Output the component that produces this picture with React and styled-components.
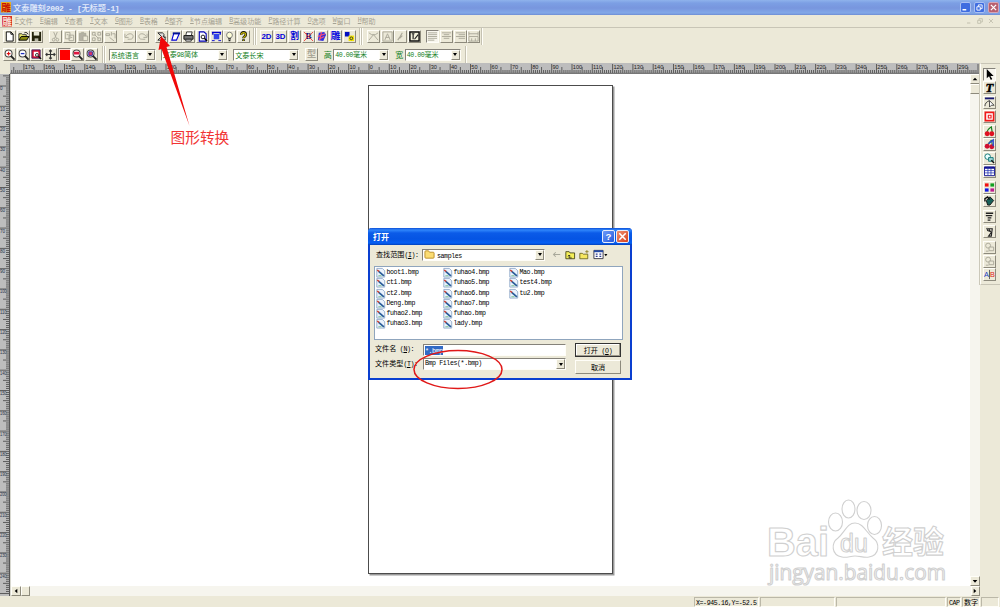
import React from "react";
import styled, { createGlobalStyle, css } from "styled-components";

const face = "#ece9d8";

const Global = createGlobalStyle`
  html, body { margin: 0; padding: 0; overflow: hidden; }
  * { box-sizing: border-box; }
  svg { display: block; flex: none; overflow: visible; }
`;

const Screen = styled.div`
  position: relative;
  width: 1000px;
  height: 607px;
  display: flex;
  flex-direction: column;
  background: ${face};
  color: #000;
  font-family: "Noto Sans CJK SC", sans-serif;
  font-size: 7.1px;
  line-height: 10px;
  white-space: nowrap;
  overflow: hidden;
`;

/* latin letters take half the width of a chinese one */
const Half = styled.span`
  font-family: "Liberation Mono", monospace;
  font-size: 6.6px;
  line-height: 1;
  letter-spacing: -0.4px;
  white-space: pre;
  ${p => p.$u && css`text-decoration: underline;`}
`;

const raised = css`
  border: 1px solid;
  border-color: #fffef8 #8d8a7c #8d8a7c #fffef8;
`;

const sunken = css`
  border: 1px solid;
  border-color: #85827a #fffef8 #fffef8 #85827a;
`;

// ---------- title and menu ----------

const TitleBar = styled.div`
  height: 15px;
  flex: none;
  display: flex;
  align-items: center;
  padding: 0 1px 0 1px;
  background: linear-gradient(#8fb3ec 0, #7c9fe4 3px, #7896de 8px, #82a8e8 13px, #6d8dd4 15px);
  color: #e4ecfb;
  font-weight: 500;
  font-size: 8.2px;
`;

const TitleText = styled.span`
  margin-left: 1px;
  flex: 1;

  ${Half} {
    font-size: 8px;
    letter-spacing: -0.35px;
    font-weight: bold;
  }
`;

const WinButton = styled.span`
  width: 11px;
  height: 11px;
  margin-left: 3px;
  border: 1px solid ${p => (p.$close ? "#d5a5b5" : "#a9c0f3")};
  border-radius: 2px;
  background: ${p => (p.$close ? "#b8606f" : "#3f6de0")};
`;

const MenuBar = styled.div`
  height: 12px;
  flex: none;
  display: flex;
  align-items: center;
  padding: 0 5px 0 2px;
  color: #a5a293;
`;

const MenuItems = styled.span`
  display: flex;
  gap: 7.15px;
  margin-left: 2px;
`;

const MenuItem = styled.span`
  display: flex;
  align-items: center;

  ${Half} {
    width: 3.7px;
  }
`;

const MdiIcons = styled.span`
  display: flex;
  gap: 3px;
`;

const Spring = styled.span`
  flex: 1;
`;

// ---------- toolbars ----------

const ToolRow = styled.div`
  height: 18px;
  flex: none;
  display: flex;
  align-items: center;
  padding-left: 3px;
  border-top: 1px solid ${p => (p.$first ? "#c8c5b6" : face)};
`;

const Group = styled.div`
  display: flex;
  gap: 0.7px;
  margin-right: ${p => p.$after || 0}px;
`;

const ToolButton = styled.span`
  width: 13px;
  height: 13px;
  display: flex;
  align-items: center;
  justify-content: center;
  ${raised}
  ${p => p.$down && sunken}
  background: ${p => (p.$down ? "#f8f6ee" : face)};
`;

const Divider = styled.span`
  width: 2px;
  height: 17px;
  margin-right: ${p => p.$after || 0}px;
  border-left: 1px solid #c5c2b2;
  border-right: 1px solid #fffef8;
`;

const Combo = styled.span`
  width: ${p => p.$w}px;
  height: 12px;
  margin-right: ${p => p.$after || 0}px;
  display: flex;
  align-items: center;
  padding-left: 1px;
  overflow: hidden;
  color: ${p => p.$color || "#128024"};
  background: #fff;
  ${sunken}
`;

const DropButton = styled.span`
  width: 9px;
  height: 100%;
  margin-left: auto;
  flex: none;
  display: flex;
  align-items: center;
  justify-content: center;
  ${raised}
  background: ${face};

  &::after {
    content: "";
    border: 2.5px solid transparent;
    border-top: 3px solid #000;
    border-bottom: 0;
  }
`;

const ComboLabel = styled.span`
  width: 9.5px;
  font-size: 8px;
  color: #128024;
`;

// ---------- work area ----------

const Main = styled.div`
  flex: 1;
  min-height: 0;
  display: flex;
`;

const Workspace = styled.div`
  width: 980px;
  display: flex;
  flex-direction: column;
`;

const RulerRow = styled.div`
  height: 11px;
  flex: none;
  padding-left: 10px;
`;

const BodyRow = styled.div`
  display: flex;
  height: 522px;
`;

const BodyColumn = styled.div`
  width: 969px;
`;

const Middle = styled.div`
  height: 512px;
  flex: none;
  display: flex;
`;

const Canvas = styled.div`
  width: 959px;
  padding: 11px 0 0 357px;
  background: #fff;
`;

const Sheet = styled.div`
  width: 245px;
  height: 489px;
  border: 1px solid #4c4c4c;
  box-shadow: 1.5px 1.5px 0 #9a9a9a;
`;

const VScroll = styled.div`
  width: 10px;
  display: flex;
  flex-direction: column;
  background: #f6f5ee;
`;

const HScroll = styled.div`
  height: 10px;
  display: flex;
  background: #f6f5ee;
`;

const ScrollButton = styled.span`
  width: 9.5px;
  height: 10px;
  flex: none;
  display: flex;
  align-items: center;
  justify-content: center;
  ${raised}
  background: ${face};
`;

const SideTools = styled.div`
  width: 20px;
  height: 222px;
  padding: 3.5px 0 0 2px;
  border-left: 1px solid #fffef8;
  border-top: 1px solid #c8c5b6;
  border-bottom: 1px solid #c8c5b6;
  box-shadow: -1px 0 0 #cbc8b9;
`;

const SideSlot = styled.div`
  margin-bottom: ${p => p.$gap || 0}px;
`;

const StatusBar = styled.div`
  height: 11px;
  flex: none;
  display: flex;
  align-items: center;
  gap: 1px;
  padding-left: 694px;
`;

const StatusCell = styled.span`
  width: ${p => p.$w}px;
  height: 10px;
  padding-left: 1px;
  line-height: 8px;
  border: 1px solid;
  border-color: #bbb8a8 #fffef8 #fffef8 #bbb8a8;
`;

// ---------- dialog ----------

const Dialog = styled.div`
  position: absolute;
  left: 368px;
  top: 228px;
  width: 264px;
  height: 152px;
  display: flex;
  flex-direction: column;
  border: 2px solid #0a3fd0;
  border-top: 0;
  border-radius: 4px 4px 0 0;
  background: ${face};
`;

const DialogTitle = styled.div`
  height: 17px;
  margin: 0 -2px;
  padding: 0 3px 0 5px;
  flex: none;
  display: flex;
  align-items: center;
  border-radius: 4px 4px 0 0;
  background: linear-gradient(#0d4fd6 0, #2f86fb 2px, #0b5be8 5px, #0554e3 11px, #0660f5 15px, #0340b8 17px);
  color: #fff;
  font-size: 8px;
  font-weight: bold;
`;

const DialogButton = styled.span`
  width: 13px;
  height: 13px;
  margin-left: 1px;
  border: 1px solid #e8eefc;
  border-radius: 2px;
  background: ${p => (p.$close ? "linear-gradient(135deg, #ee9070, #d8401c)" : "linear-gradient(135deg, #6d9bf8, #2358de)")};
`;

const LookRow = styled.div`
  height: 21px;
  flex: none;
  display: flex;
  align-items: center;
  padding: 0 0 2px 6px;
`;

const LookLabel = styled.span`
  width: 46px;
`;

const FolderName = styled.span`
  margin-left: 2px;
  padding-top: 1px;
`;

const LookIcons = styled.span`
  display: flex;
  align-items: center;
  gap: 4px;
  margin-left: 7px;
`;

const FileList = styled.div`
  width: 249px;
  height: 74px;
  margin-left: 4px;
  flex: none;
  display: grid;
  grid-template-rows: repeat(6, 10.15px);
  grid-template-columns: 67px 66px 66px;
  grid-auto-flow: column;
  padding: 1px 0 0 1px;
  border: 1px solid #8fa5bd;
  background: #fff;
`;

const FileItem = styled.span`
  display: flex;
  align-items: center;

  ${Half} {
    padding-top: 1px;
    margin-left: 1px;
  }
`;

const Form = styled.div`
  display: grid;
  grid-template-columns: 48px 143px 55px;
  grid-template-rows: 14px 15px;
  row-gap: 2px;
  padding: 2px 0 0 5px;
`;

const FormLabel = styled.span`
  height: 11px;
  line-height: 11px;
  margin-top: ${p => p.$top || 0}px;
`;

const NameField = styled.span`
  height: 12px;
  margin-top: 2px;
  display: flex;
  align-items: center;
  padding-left: 1px;
  background: #fff;
  ${sunken}
`;

const Selected = styled.span`
  height: 9px;
  line-height: 8px;
  background: #316ac5;
  color: #fff;
`;

const PushButton = styled.span`
  width: 46px;
  height: 14px;
  margin: ${p => (p.$main ? "1px 0 0 9px" : "2px 0 0 9px")};
  display: flex;
  align-items: center;
  justify-content: center;
  ${raised}
  ${p => p.$main && css`
    border-color: #333;
    box-shadow: inset -1px -1px 0 #9d9a8c, inset 1px 1px 0 #fff;
  `}
`;

const Overlay = styled.svg`
  position: absolute;
  left: 0;
  top: 0;
`;

const Note = styled.div`
  position: absolute;
  left: 170.5px;
  top: 127px;
  font-size: 14.7px;
  line-height: 20px;
  color: #f23434;
`;

// 12x12 drawings for the buttons
const glyph = (t, fill = "#0000d8", size = 8, family = "Liberation Sans") => (
  <text x="6" y="9" textAnchor="middle" fontSize={size} fontWeight="bold" fill={fill}
    style={{ fontFamily: `"${family}", "Noto Sans CJK SC", sans-serif` }}>{t}</text>
);

const lens = inner => (
  <g>
    <circle cx="5" cy="5" r="3.8" fill="#fff" stroke="#444" strokeWidth="1.1" />
    <path d="M7.5 7.5L11.500 11.500" stroke="#222" strokeWidth="2" />
    {inner}
  </g>
);

const gray = "#aaa798";

const art = {
  new: <path d="M2.500 1h5l2.500 2.500v7.500h-7.500zM7.500 1v2.500H10" fill="#fff" stroke="#000" />,
  open: <g><path d="M1 10V3h3l1 1h4v2" fill="#e8e870" stroke="#333" /><path d="M1 10l2.500-4H12L9.500 10z" fill="#8a8a10" stroke="#000" /><path d="M7 2c2-1 3 0 4 1.500" stroke="#000" fill="none" /></g>,
  save: <g><path d="M1 1h10v10H1z" fill="#23230c" /><path d="M3 1h6v4H3z" fill="#e8e8d8" /><path d="M4 8h4v3H4z" fill="#b8b8a8" /></g>,
  cut: <g fill="none" stroke={gray}><path d="M4 1l3 7M8 1L5 8" /><circle cx="4" cy="9.500" r="1.500" /><circle cx="8" cy="9.500" r="1.500" /></g>,
  copy: <path d="M1.500 1.500h5v7h-5zM5.500 4.500h5v6h-5zM3 4h2M7 7h2" fill={face} stroke={gray} />,
  paste: <g stroke={gray}><path d="M1.500 2.500h7v8h-7z" fill="#b4b1a4" /><path d="M5.500 5.500h5v5h-5z" fill={face} /><path d="M3.500 1.500h3" /></g>,
  grid: <path d="M1.500 1.500h3v3h-3zM7.500 1.500h3v3h-3zM1.500 7.500h3v3h-3zM7.500 7.500h3v3h-3zM4 4l4 4" fill="none" stroke={gray} />,
  pair: <path d="M1 3h4v2H1zM7 1v4M5 7l5 4M8 3h3v5" fill="none" stroke={gray} />,
  undo: <path d="M1 3v4h4M2 6c2-4 8-4 8 0c0 3-3 3-4 3H4" fill="none" stroke={gray} />,
  redo: <path d="M11 3v4H7M10 6C8 2 2 2 2 6c0 3 3 3 4 3h3" fill="none" stroke={gray} />,
  convert: <path d="M2 2h5l2 2-1 2 2 2v2H2l4-4zM8 6l3 1" fill="#ddd" stroke="#222" />,
  shape: <g><path d="M4 3h6l-3 7H2z" fill="#fff" stroke="#0000d8" strokeWidth="1.200" /><path d="M3 2.500h8" stroke="#001090" strokeWidth="2" /></g>,
  print: <g><path d="M4 1h6l-1 4H3z" fill="#fff" stroke="#333" /><path d="M1 5h10v4H1z" fill="#777" stroke="#111" /><path d="M3 9h6v2H3z" fill="#fff" stroke="#222" /></g>,
  preview: <g><path d="M2.500 1h5l2.500 2v8h-7.500z" fill="#fff" stroke="#0000b8" strokeWidth="1.200" /><circle cx="6.500" cy="6.500" r="2" fill="none" stroke="#111" /><path d="M8 8l3 3" stroke="#000" strokeWidth="1.500" /></g>,
  plot: <g><path d="M1 1.500h10M2 1v3M10 1v3" stroke="#0000d0" strokeWidth="1.500" /><path d="M3 3h6v6H3z" fill="#3344e8" /><path d="M1 10.500h3M8 10.500h3" stroke="#0000d0" /></g>,
  bulb: <g><circle cx="6" cy="4.500" r="3.200" fill="#ffffd8" stroke="#777" /><path d="M4.500 8.500h3M5 10.500h2" stroke="#222" strokeWidth="1.300" /></g>,
  help: <g stroke="#111" strokeWidth="2.800" fill="none"><path d="M3.500 4c0-3.500 5-3.500 5 0c0 2-2.500 2-2.500 4M6 9v2" /><path d="M3.500 4c0-3 5-3 5 0c0 2-2.500 2-2.500 4M6 9.500v1" stroke="#c8b800" strokeWidth="1.200" /></g>,
  d2: glyph("2D", "#0000d8", 8.6),
  d3: glyph("3D", "#0000d8", 8.6),
  carve: glyph("割", "#0000d8", 9.5),
  noB: <g>{glyph("B", "#10107a", 10, "Liberation Serif")}<path d="M1 1l10 10M11 1L1 11" stroke="#f03030" strokeWidth=".9" /></g>,
  flag: <g><path d="M3 2l6-1 2 3-3 7-6-1z" fill="#3030e0" /><path d="M2 6l8-3M3 9l6-3M6 1L4 10" stroke="#ff5070" strokeWidth="1.200" /></g>,
  diao: glyph("雕", "#1010e0", 10.5),
  boxes: <g><path d="M1 1h5v5H1z" fill="#0010c0" /><path d="M5 5h6v6H5z" fill="#f6e800" /><circle cx="8" cy="8" r="1.500" fill="none" stroke="#333" /></g>,
  curve: <path d="M1 2l3 2M11 2L8 4M1 10l5-6 5 6M4 4h4" fill="none" stroke={gray} />,
  boxA: <path d="M1 1h10v10H1zM3 10l3-7 3 7M4 7h4" fill="none" stroke={gray} />,
  slash: <path d="M3 10l2-3 3-5M5 8l3-3" fill="none" stroke={gray} strokeWidth="1.200" />,
  edit: <g><path d="M1 1h10v10H1z" fill="#f2f0dc" stroke="#111" strokeWidth="1.600" /><path d="M3 3h3M4.500 3v6M6 9l4-5" stroke="#222" strokeWidth="1.300" /></g>,
  left: <path d="M1 2h10M1 4h10M1 6h10M1 8h10M1 10h7" stroke={gray} />,
  center: <path d="M1 2h10M3 4h6M1 6h10M3 8h6" stroke={gray} />,
  right: <path d="M1 2h10M4 4h7M1 6h10M4 8h7" stroke={gray} />,
  width: <path d="M1 1v4M11 1v4M1 3h10M1 6h10v5H1zM4 8v3M8 8v3" fill="none" stroke={gray} />,
  zoomIn: lens(<path d="M3 5h4M5 3v4" stroke="#e01010" strokeWidth="1.200" />),
  zoomOut: lens(<path d="M3 5h4" stroke="#2030c0" strokeWidth="1.400" />),
  fit: <g><path d="M1 1h9v9H1z" fill="#e01030" stroke="#402060" /><path d="M3 3h5v5H3z" fill="#fff" /><circle cx="6.500" cy="6.500" r="1.600" fill="#fff" stroke="#222" /><path d="M8 8l3 3" stroke="#111" strokeWidth="1.500" /></g>,
  move: <path d="M6 1v10M1 6h10M4.500 2.500L6 1l1.500 1.500M4.500 9.500L6 11l1.500-1.500M2.500 4.500L1 6l1.500 1.500M9.500 4.500L11 6 9.500 7.500" fill="none" stroke="#333" strokeWidth="1.200" />,
  red: <path d="M1 1h11v11H1z" fill="#ff0000" />,
  zoomR: lens(<path d="M2 3h6v3H2z" fill="#e01840" />),
  zoomB: lens(<path d="M3 3h4v4H3z" fill="#e03060" stroke="#3030a0" />),
  type: glyph("型", gray, 10),
  pointer: <path d="M3 0v10l2.500-2 2 4L9 11 7 7.500h3.500z" fill="#000" />,
  T: <text x="6" y="11" textAnchor="middle" fontSize="14" fontWeight="bold" fontStyle="italic" stroke="#000" strokeWidth=".5" style={{ fontFamily: '"Liberation Serif", serif' }}>T</text>,
  node: <g><path d="M1 1.500h10" stroke="#181870" strokeWidth="2" /><path d="M1 10c0-3 2-5 5-6" stroke="#333" fill="none" /><path d="M6 4v7l2-2h3z" fill="#fff" stroke="#333" strokeWidth=".9" /></g>,
  frame: <g fill="none" stroke="#f01818"><path d="M1.500 1.500h9v9h-9z" fill="#fff" strokeWidth="1.800" /><path d="M4.700 4.700h3v3h-3z" strokeWidth="1.200" /></g>,
  cherry: <g><path d="M3 7c1-4 4-5 5-6l1 6" fill="none" stroke="#188020" strokeWidth="1.300" /><circle cx="3.500" cy="8.500" r="2.700" fill="#e01020" /><circle cx="8.500" cy="8.500" r="2.700" fill="#e01020" /></g>,
  cherry2: <g><path d="M3 7l5-6 1 6" fill="none" stroke="#188020" /><circle cx="3.500" cy="8" r="2.700" fill="#d01030" /><circle cx="8.500" cy="8.500" r="2.700" fill="#d01030" /><path d="M5 5l5-4v7" stroke="#2848c8" strokeWidth="1.600" fill="none" /></g>,
  bubbles: <g fill="#e8ffff" stroke="#177"><circle cx="4" cy="4" r="3" /><path d="M5 5h5v4H5z" fill="#9ed8d8" /><path d="M8 8l3 3" stroke="#111" strokeWidth="1.500" /></g>,
  table: <g><path d="M.500 1h11v9.500H.500z" fill="#fff" stroke="#101090" /><path d="M.500 2h11" stroke="#101090" strokeWidth="2" /><path d="M1 5h10M1 7.500h10M4.300 1v9M7.600 1v9" stroke="#2030b0" strokeWidth=".8" /></g>,
  colors: <g><path d="M1 1.500h4v3.500H1z" fill="#f01010" /><path d="M7 1.500h4v3.500H7z" fill="#10a020" /><path d="M1 7h4v3.500H1z" fill="#1018e0" /><path d="M7 7h4v3.500H7z" fill="#c01890" /></g>,
  bucket: <g><path d="M2.500 6l4-4 4 4-4 5H4z" fill="#186058" stroke="#111" /><path d="M1 7V4l3-2 2 3" stroke="#111" fill="none" strokeWidth="1.500" /></g>,
  lines: <path d="M2 2.500h8M2 5h7M4 7.500h4M4 10h3" stroke="#222" strokeWidth="1.500" />,
  knife: <path d="M3 2l1 3 3 1-2-3h4l-1 8H5l3-4" fill="none" stroke="#222" strokeWidth="1.200" />,
  weld: <g fill={face} stroke={gray}><circle cx="4.500" cy="4" r="2.700" /><path d="M5.500 5.500h5v4h-5zM2 10h3" /></g>,
  AB: <g><text x="0" y="9" fontSize="8" fill="#2040c0" style={{ fontFamily: '"Liberation Sans", sans-serif' }}>A</text><path d="M6 1v10" stroke="#333" strokeWidth=".8" /><text x="6.500" y="9" fontSize="8" fill="#e02020" style={{ fontFamily: '"Liberation Sans", sans-serif' }}>B</text></g>,
  up: <path d="M6 4l3.500 4h-7z" fill="#000" />,
  down: <path d="M6 8.500l3.500-4h-7z" fill="#000" />,
  arrowL: <path d="M4 6l4-3.500v7z" fill="#000" />,
  arrowR: <path d="M8 6L4 2.500v7z" fill="#000" />,
  min: <path d="M2 9h5" stroke="#fff" strokeWidth="2" />,
  restore: <path d="M4.500 5V2.500h5v5H7M2.500 5h4.500v4.500H2.500z" fill="none" stroke="#fff" strokeWidth="1.200" />,
  close: <path d="M2.500 2.500l7 7M9.500 2.500l-7 7" stroke="#fff" strokeWidth="1.700" />,
  minG: <path d="M3 9h5" stroke="#c2bfae" strokeWidth="1.500" />,
  restoreG: <path d="M4.500 5V2.500h5v5H7M2.500 5h4.500v4.500H2.500z" fill="none" stroke="#c2bfae" strokeWidth="1.300" />,
  closeG: <path d="M3 3l6 6M9 3L3 9" stroke="#c2bfae" strokeWidth="1.300" />,
  question: <text x="6" y="10" textAnchor="middle" fontSize="10.500" fontWeight="bold" fill="#fff" style={{ fontFamily: '"Liberation Sans", sans-serif' }}>?</text>,
  folder: <path d="M1 3q0-1 1-1h3l1 1.500h4q1 0 1 1V9q0 1-1 1H2q-1 0-1-1z" fill="#fbdc72" stroke="#b98c28" />,
  back: <path d="M11 6H2M5 3L2 6l3 3" fill="none" stroke="#a8a89a" strokeWidth="1.400" />,
  folderUp: <g><path d="M1 3V2h4l1 1.500h5.500V10.500H1z" fill="#f4ee58" stroke="#3c3c10" /><path d="M5 9.500h3M5 9.500V6M3.500 7.500L5 6l1.500 1.500" fill="none" stroke="#222" /></g>,
  folderNew: <g><path d="M1 4h3l1 1h5.500v5.500H1z" fill="#f6e660" stroke="#66601c" /><path d="M9.500 0v4M7.500 2h4" stroke="#8d7d20" /></g>,
  views: <g><path d="M1 1.500h10v9H1z" fill="#fff" stroke="#334" /><path d="M1 2.500h10" stroke="#234aa8" strokeWidth="2" /><path d="M3 5.500h2M7 5.500h2M3 8h2M7 8h2" stroke="#2a3a90" strokeWidth="1.300" /><path d="M12.300 5.500h3.400L14 7.800z" fill="#000" /></g>,
  bmp: <g><path d="M1 .500h7l3 3v8H1z" fill="#eaf2fd" stroke="#84a0c4" /><path d="M3 4l7 6" stroke="#2a5c98" strokeWidth="2.200" /><path d="M1.500 2.500l2.500 2" stroke="#d04030" strokeWidth="1.800" /><path d="M3 9h4v1.500H3z" fill="#8cc8a0" /></g>,
};

const Icon = ({ name, size = 10 }) => (
  <svg width={size} height={size} viewBox="0 0 12 12">{art[name]}</svg>
);

const Logo = ({ bg, fg }) => (
  <svg width="11" height="11" viewBox="0 0 11 11">
    <rect width="10" height="10.500" fill={bg} />
    <text x="5" y="8.800" textAnchor="middle" fontSize="9.500" fontWeight="bold" fill={fg} style={{ fontFamily: '"Noto Sans CJK SC", sans-serif' }}>雕</text>
  </svg>
);

const Buttons = ({ names, down, after }) => (
  <Group $after={after}>
    {names.split(" ").map(n => (
      <ToolButton key={n} $down={n === down}><Icon name={n} size={11} /></ToolButton>
    ))}
  </Group>
);

const menus = [
  ["F", "文件"], ["E", "编辑"], ["V", "查看"], ["T", "文本"], ["G", "图形"],
  ["B", "表格"], ["A", "整齐"], ["k", "节点编辑"], ["B", "高级功能"],
  ["P", "路径计算"], ["O", "选项"], ["W", "窗口"], ["H", "帮助"],
];

const sideTools = [
  ["pointer", 0], ["T", 2.5], ["node", 0.5], ["frame", 2.5], ["cherry", 0.3],
  ["cherry2", 0.3], ["bubbles", 0.3], ["table", 3], ["colors", 0.6], ["bucket", 2.5],
  ["lines", 2.5], ["knife", 3], ["weld", 0.2], ["weld", 0.2], ["AB", 0],
];

const files = [
  "boot1", "ct1", "ct2", "Deng", "fuhao2", "fuhao3",
  "fuhao4", "fuhao5", "fuhao6", "fuhao7", "fuhao", "lady",
  "Mao", "test4", "tu2",
];

const STEP = 20.3;
const rulerFont = { fontFamily: '"Liberation Sans", sans-serif' };

function ticks(from, to, zero) {
  const list = [];
  const first = Math.ceil(((from - zero) / STEP) * 10);
  const last = Math.floor(((to - zero) / STEP) * 10);
  for (let i = first; i <= last; i++) list.push([i, zero + (i * STEP) / 10]);
  return list;
}

const TopRuler = () => (
  <svg width="970" height="11">
    <rect width="970" height="11" fill="#bdbdbd" />
    {ticks(0, 969, 359).map(([i, x]) => (
      <g key={i}>
        <path d={`M${x} ${i % 10 === 0 ? 1 : i % 5 === 0 ? 4 : 7}V10`} stroke="#444" strokeWidth=".8" />
        {i % 10 === 0 && i < 300 && <text x={x + 0.8} y="5.500" fontSize="5.600" fill="#222" style={rulerFont}>{Math.abs(i)}</text>}
      </g>
    ))}
    <path d="M0 10.300H970" stroke="#666" />
  </svg>
);

const LeftRuler = () => (
  <svg width="11" height="522">
    <rect width="11" height="522" fill="#bdbdbd" />
    {ticks(0, 521, 12).map(([i, y]) => (
      <g key={i}>
        <path d={`M${i % 10 === 0 ? 0 : i % 5 === 0 ? 3 : 6} ${y}H9`} stroke="#444" strokeWidth=".8" />
        {i % 10 === 0 && y < 515 && <text x="0" y={y + 4.4} fontSize="4.600" textLength={i >= 100 ? 6.5 : undefined} lengthAdjust="spacingAndGlyphs" fill="#24344c" style={rulerFont}>{Math.abs(i)}</text>}
      </g>
    ))}
    <path d="M9.500 0V522" stroke="#555" />
    <path d="M10.500 0V522" stroke="#d8d8d0" />
  </svg>
);

const Watermark = () => (
  <g fill="#fff" stroke="#d0d0d0" strokeWidth="1.100" strokeLinejoin="round">
    <text x="767" y="556" fontSize="40" fontWeight="bold" textLength="62" lengthAdjust="spacingAndGlyphs" style={rulerFont}>Bai</text>
    <ellipse cx="835.500" cy="522" rx="7" ry="9" />
    <ellipse cx="848.500" cy="509" rx="6.500" ry="9" />
    <ellipse cx="864" cy="510.500" rx="7" ry="9" />
    <ellipse cx="874.500" cy="525.500" rx="7" ry="9" />
    <path d="M855 523c-8 0-10 9-17 15c-7 5-7 17 4 19c5 1 8-1 13-1s9 2 14 1c11-2 11-14 4-19c-7-6-10-15-18-15z" />
    <text x="840" y="552" fontSize="25" textLength="28" style={rulerFont}>du</text>
    <text x="882" y="553" fontSize="31" fontWeight="bold" textLength="62" style={{ fontFamily: '"Noto Sans CJK SC", sans-serif' }}>经验</text>
    <text x="769" y="579.500" fontSize="21" textLength="177" lengthAdjust="spacingAndGlyphs" style={{ fontFamily: '"Open Sans", sans-serif' }}>jingyan.baidu.com</text>
  </g>
);

export default function App() {
  return (
    <Screen>
      <Global />
      <TitleBar>
        <Logo bg="#e8b020" fg="#c81000" />
        <TitleText>文泰雕刻<Half>2002 - [</Half>无标题<Half>-1]</Half></TitleText>
        <WinButton><Icon name="min" size={9} /></WinButton>
        <WinButton><Icon name="restore" size={9} /></WinButton>
        <WinButton $close><Icon name="close" size={9} /></WinButton>
      </TitleBar>
      <MenuBar>
        <Logo bg="#d83028" fg="#f6d8d0" />
        <MenuItems>
          {menus.map(([key, label]) => (
            <MenuItem key={label}><Half $u>{key}</Half>{label}</MenuItem>
          ))}
        </MenuItems>
        <Spring />
        <MdiIcons>
          <Icon name="minG" size={8} />
          <Icon name="restoreG" size={8} />
          <Icon name="closeG" size={8} />
        </MdiIcons>
      </MenuBar>

      <ToolRow $first>
        <Buttons names="new open save" after={6} />
        <Buttons names="cut copy paste grid pair" after={5.5} />
        <Buttons names="undo redo" after={5.5} />
        <Buttons names="convert shape print preview plot bulb help" after={3} />
        <Divider />
        <Divider $after={3.5} />
        <Buttons names="d2 d3 carve noB flag diao boxes" after={3.5} />
        <Divider />
        <Divider $after={4} />
        <Buttons names="curve boxA slash edit" after={5} />
        <Buttons names="left center right width" down="left" after={1} />
        <Divider />
      </ToolRow>
      <ToolRow>
        <Buttons names="zoomIn zoomOut fit move red zoomR zoomB" down="red" after={4} />
        <Divider />
        <Divider $after={2.5} />
        <Combo $w={47} $after={5}>系统语言<DropButton /></Combo>
        <Combo $w={67} $after={5.5}><span>文泰<Half>98</Half>简体</span><DropButton /></Combo>
        <Combo $w={66} $after={6}>文泰长宋<DropButton /></Combo>
        <Buttons names="type" after={5.5} />
        <ComboLabel>高</ComboLabel>
        <Combo $w={56} $after={6}><span><Half>40.00</Half>毫米</span><DropButton /></Combo>
        <ComboLabel>宽</ComboLabel>
        <Combo $w={56} $after={4}><span><Half>40.00</Half>毫米</span><DropButton /></Combo>
        <Divider />
      </ToolRow>

      <Main>
        <Workspace>
          <RulerRow><TopRuler /></RulerRow>
          <BodyRow>
            <LeftRuler />
            <BodyColumn>
              <Middle>
                <Canvas><Sheet /></Canvas>
                <VScroll>
                  <ScrollButton><Icon name="up" size={8} /></ScrollButton>
                  <ScrollButton />
                  <Spring />
                  <ScrollButton><Icon name="down" size={8} /></ScrollButton>
                </VScroll>
              </Middle>
              <HScroll>
                <ScrollButton><Icon name="arrowL" size={8} /></ScrollButton>
                <ScrollButton />
                <Spring />
                <ScrollButton><Icon name="arrowR" size={8} /></ScrollButton>
              </HScroll>
            </BodyColumn>
          </BodyRow>
        </Workspace>
        <SideTools>
          {sideTools.map(([name, gap], i) => (
            <SideSlot key={i} $gap={gap}>
              <ToolButton $down={name === "pointer"}><Icon name={name} size={11} /></ToolButton>
            </SideSlot>
          ))}
        </SideTools>
      </Main>

      <StatusBar>
        <StatusCell $w={65}><Half>X=-945.16,Y=-52.5</Half></StatusCell>
        <StatusCell $w={75} />
        <StatusCell $w={110} />
        <StatusCell $w={14}><Half>CAP</Half></StatusCell>
        <StatusCell $w={18}>数字</StatusCell>
        <StatusCell $w={18} />
      </StatusBar>

      <Dialog>
        <DialogTitle>
          打开
          <Spring />
          <DialogButton><Icon name="question" size={11} /></DialogButton>
          <DialogButton $close><Icon name="close" size={11} /></DialogButton>
        </DialogTitle>
        <LookRow>
          <LookLabel>查找范围<Half>(<u>I</u>):</Half></LookLabel>
          <Combo $w={123} $color="#000">
            <Icon name="folder" size={11} />
            <FolderName><Half>samples</Half></FolderName>
            <DropButton />
          </Combo>
          <LookIcons>
            <Icon name="back" size={9} />
            <Icon name="folderUp" />
            <Icon name="folderNew" />
            <Icon name="views" size={11} />
          </LookIcons>
        </LookRow>
        <FileList>
          {files.map(f => (
            <FileItem key={f}>
              <Icon name="bmp" size={9.5} />
              <Half>{f}.bmp</Half>
            </FileItem>
          ))}
        </FileList>
        <Form>
          <FormLabel $top={1}>文件名<Half> (<u>N</u>):</Half></FormLabel>
          <NameField><Selected><Half>*.bmp</Half></Selected></NameField>
          <PushButton $main><span>打开<Half> (<u>O</u>)</Half></span></PushButton>
          <FormLabel>文件类型<Half>(<u>T</u>):</Half></FormLabel>
          <Combo $w={143} $color="#000"><Half>Bmp Files(*.bmp)</Half><DropButton /></Combo>
          <PushButton>取消</PushButton>
        </Form>
      </Dialog>

      <Note>图形转换</Note>
      <Overlay width="1000" height="607">
        <Watermark />
        <ellipse cx="458" cy="369.500" rx="44" ry="19" fill="none" stroke="#e01818" strokeWidth="1.500" />
        <path d="M161 36l9 10-3.500 1L189.500 126 161.500 49l-3 1z" fill="#f00808" />
      </Overlay>
    </Screen>
  );
}
